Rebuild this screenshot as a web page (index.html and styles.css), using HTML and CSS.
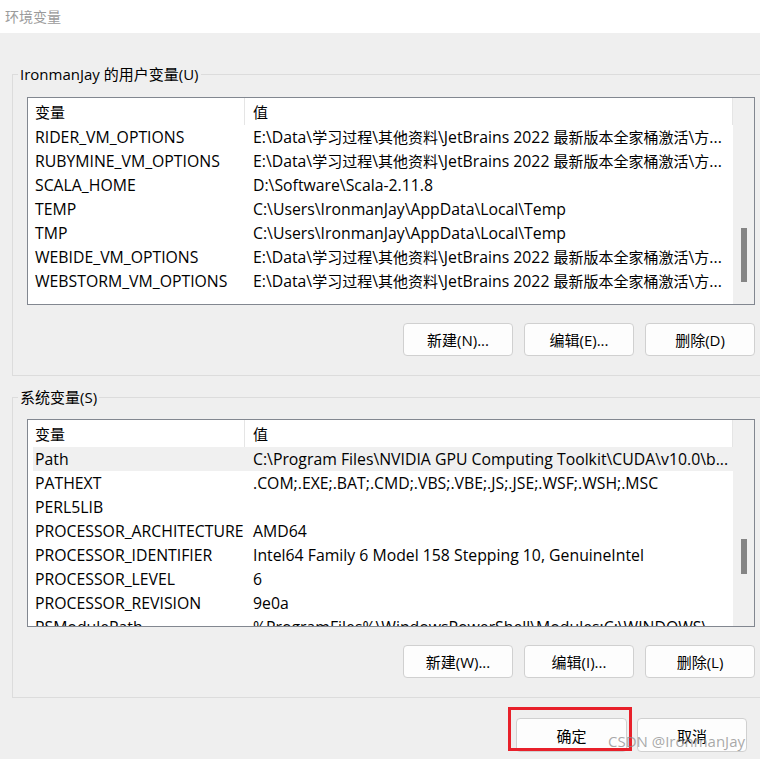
FILE: index.html
```html
<!DOCTYPE html>
<html lang="zh-CN">
<head>
    <meta charset="UTF-8">
    <meta name="viewport" content="width=device-width, initial-scale=1.0">
    <title>环境变量</title>
    <link rel="stylesheet" href="styles.css">
</head>
<body>
    <div class="titlebar">环境变量</div>

    <main class="dialog">
        <fieldset class="group">
            <legend class="group-title">IronmanJay 的用户变量(U)</legend>
            <div class="list">
                <div class="list-body">
                    <div class="list-head">
                        <span class="col-name">变量</span>
                        <span class="col-value">值</span>
                    </div>
                    <div class="row"><span class="col-name">RIDER_VM_OPTIONS</span><span class="col-value">E:\Data\<span class="han">学习过程</span>\<span class="han">其他资料</span>\JetBrains 2022 <span class="han">最新版本全家桶激活</span>\<span class="han">方</span>...</span></div>
                    <div class="row"><span class="col-name">RUBYMINE_VM_OPTIONS</span><span class="col-value">E:\Data\<span class="han">学习过程</span>\<span class="han">其他资料</span>\JetBrains 2022 <span class="han">最新版本全家桶激活</span>\<span class="han">方</span>...</span></div>
                    <div class="row"><span class="col-name">SCALA_HOME</span><span class="col-value">D:\Software\Scala-2.11.8</span></div>
                    <div class="row"><span class="col-name">TEMP</span><span class="col-value">C:\Users\IronmanJay\AppData\Local\Temp</span></div>
                    <div class="row"><span class="col-name">TMP</span><span class="col-value">C:\Users\IronmanJay\AppData\Local\Temp</span></div>
                    <div class="row"><span class="col-name">WEBIDE_VM_OPTIONS</span><span class="col-value">E:\Data\<span class="han">学习过程</span>\<span class="han">其他资料</span>\JetBrains 2022 <span class="han">最新版本全家桶激活</span>\<span class="han">方</span>...</span></div>
                    <div class="row"><span class="col-name">WEBSTORM_VM_OPTIONS</span><span class="col-value">E:\Data\<span class="han">学习过程</span>\<span class="han">其他资料</span>\JetBrains 2022 <span class="han">最新版本全家桶激活</span>\<span class="han">方</span>...</span></div>
                </div>
                <div class="scrollbar">
                    <div class="thumb thumb-user"></div>
                </div>
            </div>
            <div class="btn-row">
                <button class="btn">新建(N)...</button>
                <button class="btn">编辑(E)...</button>
                <button class="btn">删除(D)</button>
            </div>
        </fieldset>

        <fieldset class="group group-system">
            <legend class="group-title">系统变量(S)</legend>
            <div class="list">
                <div class="list-body">
                    <div class="list-head">
                        <span class="col-name">变量</span>
                        <span class="col-value">值</span>
                    </div>
                    <div class="row selected"><span class="col-name">Path</span><span class="col-value">C:\Program Files\NVIDIA GPU Computing Toolkit\CUDA\v10.0\b...</span></div>
                    <div class="row"><span class="col-name">PATHEXT</span><span class="col-value">.COM;.EXE;.BAT;.CMD;.VBS;.VBE;.JS;.JSE;.WSF;.WSH;.MSC</span></div>
                    <div class="row"><span class="col-name">PERL5LIB</span><span class="col-value"></span></div>
                    <div class="row"><span class="col-name">PROCESSOR_ARCHITECTURE</span><span class="col-value">AMD64</span></div>
                    <div class="row"><span class="col-name">PROCESSOR_IDENTIFIER</span><span class="col-value">Intel64 Family 6 Model 158 Stepping 10, GenuineIntel</span></div>
                    <div class="row"><span class="col-name">PROCESSOR_LEVEL</span><span class="col-value">6</span></div>
                    <div class="row"><span class="col-name">PROCESSOR_REVISION</span><span class="col-value">9e0a</span></div>
                    <div class="row"><span class="col-name">PSModulePath</span><span class="col-value">%ProgramFiles%\WindowsPowerShell\Modules;C:\WINDOWS\...</span></div>
                </div>
                <div class="scrollbar">
                    <div class="thumb thumb-system"></div>
                </div>
            </div>
            <div class="btn-row">
                <button class="btn">新建(W)...</button>
                <button class="btn">编辑(I)...</button>
                <button class="btn">删除(L)</button>
            </div>
        </fieldset>

        <div class="footer">
            <div class="ok-wrap">
                <button class="btn btn-footer">确定</button>
                <span class="mark"></span>
            </div>
            <button class="btn btn-footer">取消</button>
        </div>
    </main>

    <div class="watermark">CSDN @IronmanJay</div>
</body>
</html>
```

FILE: styles.css
```css
* {
    margin: 0;
    padding: 0;
    box-sizing: border-box;
}

html, body {
    overflow: hidden;
}

body {
    position: relative;
    height: 759px;
    font-family: "Open Sans", "Noto Sans CJK SC", sans-serif;
    font-size: 15px;
    color: #000;
    background: #efefef;
}

.titlebar {
    height: 33px;
    padding-left: 5px;
    line-height: 33px;
    font-size: 14px;
    color: #9b9b9b;
    background: #fff;
}

.dialog {
    padding: 31px 0 0 12px;
}

/* group boxes */
.group {
    width: 770px;
    border: 1px solid #dcdcdc;
    padding: 0 0 19px 0;
}

.group-system {
    margin-top: 11px;
}

.group-title {
    margin-left: 5px;
    padding: 0 2px;
    line-height: 20px;
    font-size: 15px;
}

/* list views */
.list {
    display: flex;
    width: 728px;
    height: 208px;
    margin: 13px 0 0 14px;
    border: 1px solid #828790;
    background: #fff;
    font-size: 15.8px;
}

.group-system .list {
    margin-top: 12px;
}

.list-body {
    flex: 1;
    overflow: hidden;
    padding-left: 5px;
}

.list-head,
.row {
    display: flex;
    align-items: center;
    white-space: nowrap;
}

.list-head {
    height: 27px;
    font-size: 15px;
}

.row {
    height: 24px;
}

.row.selected {
    background: #f0f0f0;
}

.han {
    font-size: 15px;
}

.col-name {
    flex: none;
    width: 212px;
    padding-left: 2px;
    overflow: hidden;
}

.col-value {
    flex: 1;
    padding-left: 8px;
    overflow: hidden;
}

.list-head .col-name,
.list-head .col-value {
    height: 100%;
    display: flex;
    align-items: center;
    border-right: 1px solid #e5e5e5;
}

.scrollbar {
    flex: none;
    width: 21px;
    background: #f0f0f0;
}

.thumb {
    width: 6px;
    margin-left: 8px;
    background: #858585;
}

.thumb-user {
    margin-top: 130px;
    height: 54px;
}

.thumb-system {
    margin-top: 119px;
    height: 35px;
}

/* buttons */
.btn-row {
    display: flex;
    justify-content: flex-end;
    gap: 11px;
    width: 728px;
    margin: 18px 0 0 14px;
}

.btn {
    width: 110px;
    height: 33px;
    font-family: inherit;
    font-size: 15px;
    color: #000;
    background: #fdfdfd;
    border: 1px solid #d0d0d0;
    border-radius: 4px;
}

.footer {
    display: flex;
    justify-content: flex-end;
    gap: 10px;
    margin-top: 20px;
    padding-right: 13px;
}

.btn-footer {
    height: 34px;
}

.ok-wrap {
    position: relative;
}

.ok-wrap .btn-footer {
    width: 111px;
}

.mark {
    position: absolute;
    left: -8px;
    top: -11px;
    width: 124px;
    height: 44px;
    border: 3px solid #e8202a;
}

.watermark {
    position: absolute;
    right: 15px;
    bottom: 8px;
    font-size: 15px;
    color: rgba(140, 140, 140, 0.75);
}
```
